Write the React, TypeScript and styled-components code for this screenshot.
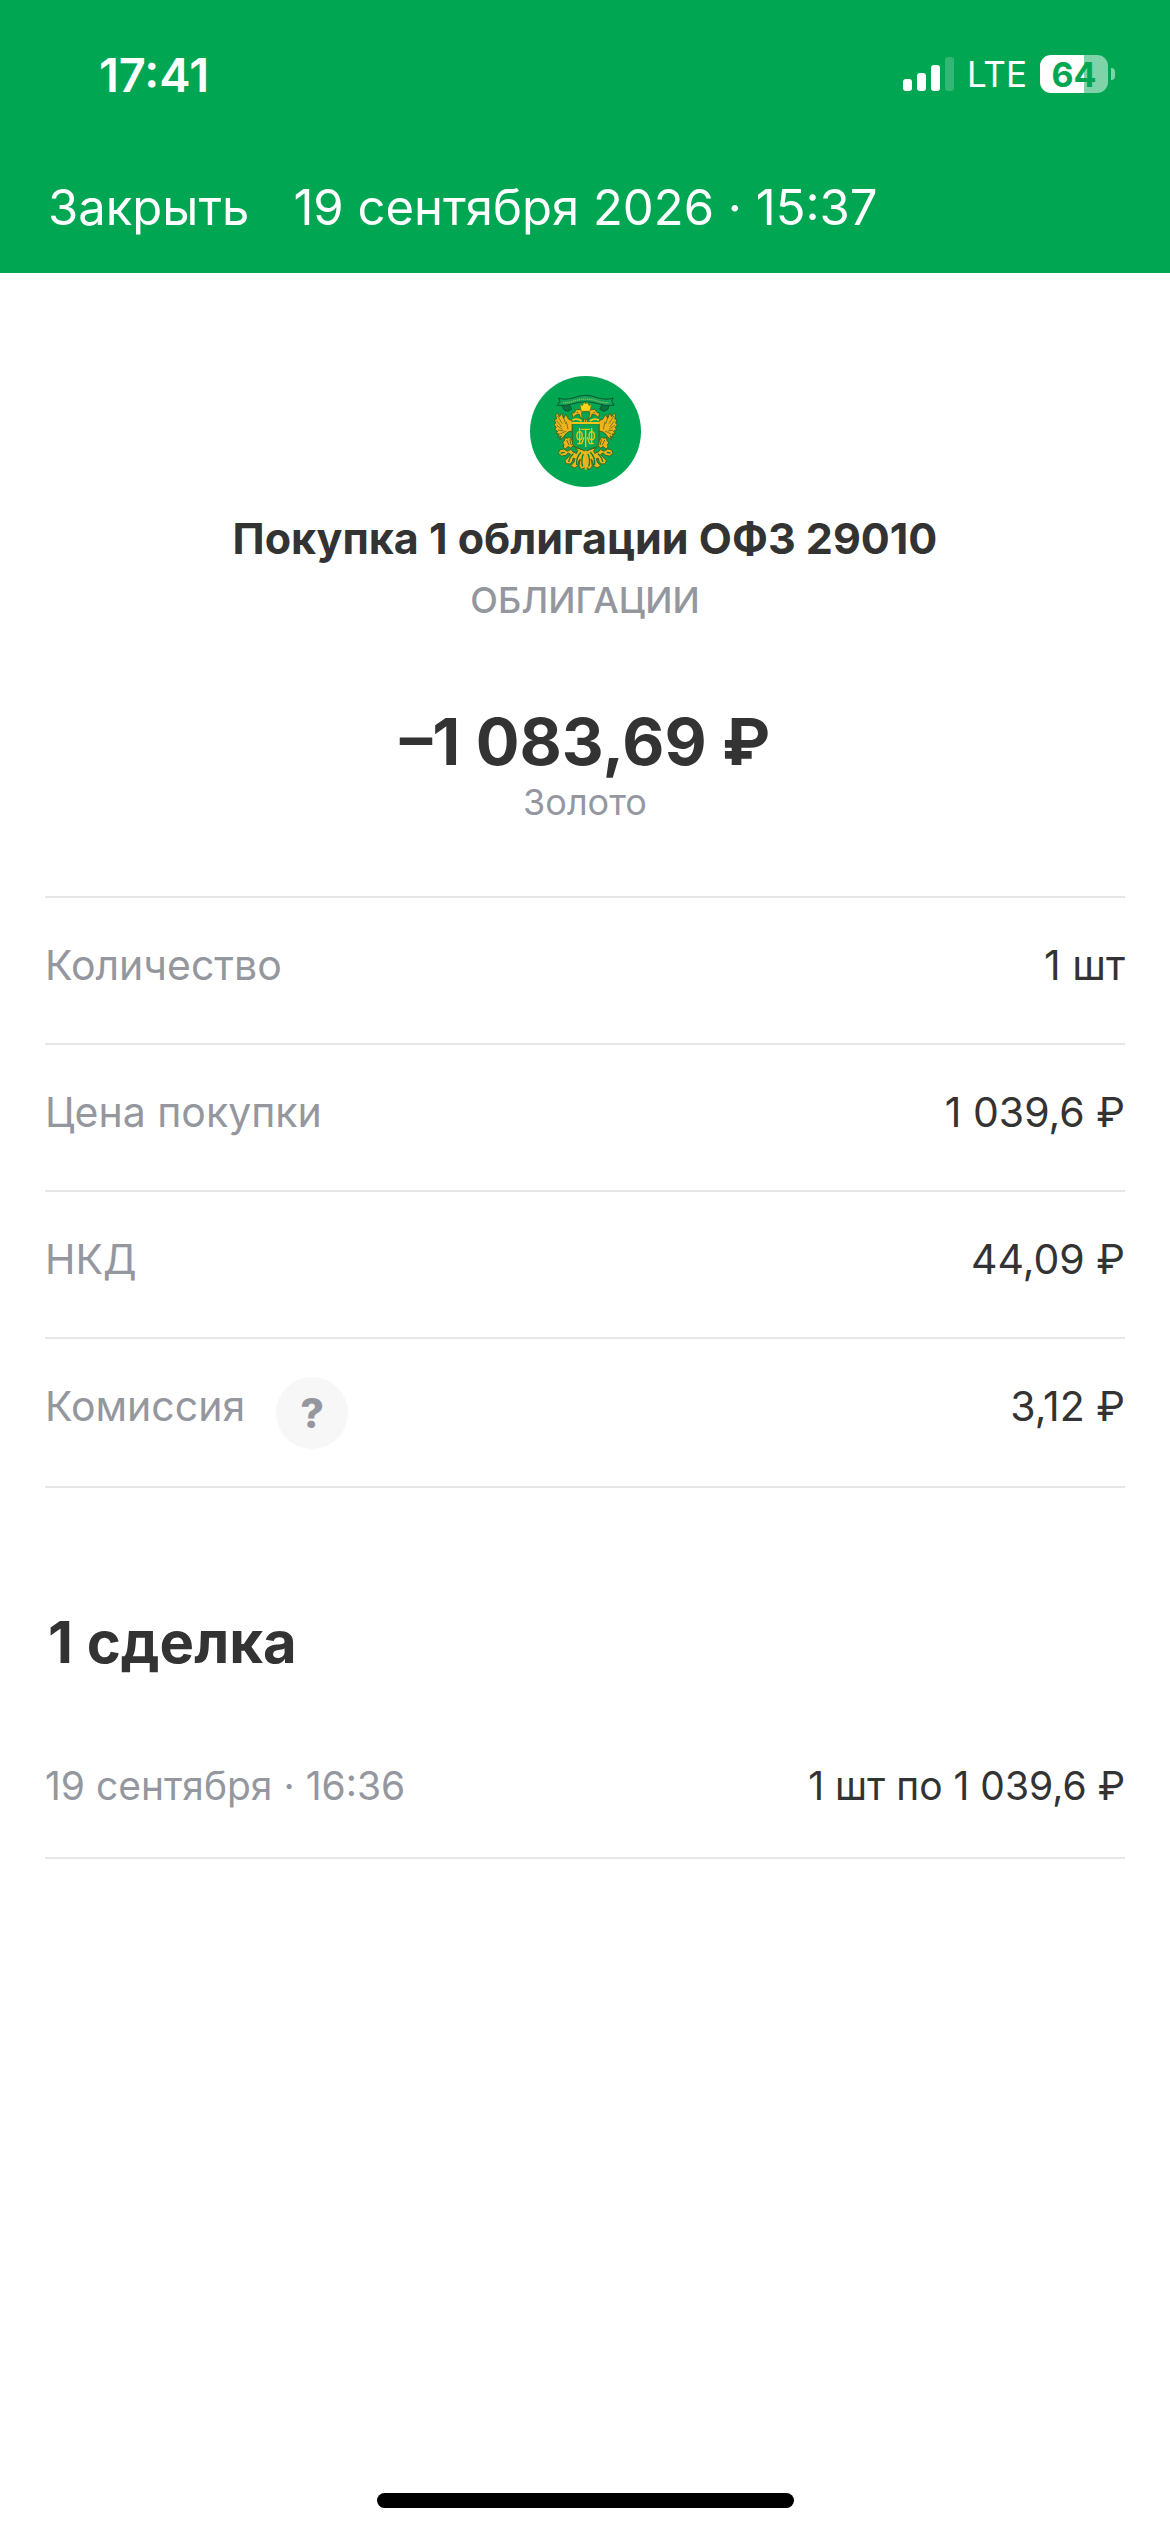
import styled, { createGlobalStyle } from 'styled-components';

const GlobalStyle = createGlobalStyle`
  * {
    box-sizing: border-box;
    margin: 0;
    padding: 0;
  }

  body {
    background: #fff;
    color: #333;
    font-family: Inter, 'Noto Sans', sans-serif;
  }

  button {
    border: none;
    background: none;
    font: inherit;
    cursor: pointer;
  }
`;

const PageLayout = styled.div`
  display: flex;
  flex-direction: column;
  min-height: 100vh;
`;

const Header = styled.header`
  padding: 46px 48px 36px;
  background: #01a652;
  color: #fff;
`;

const StatusBar = styled.div`
  display: flex;
  align-items: center;
  justify-content: space-between;
  height: 56px;
  padding: 0 7px 0 51px;
`;

const Clock = styled.time`
  font-size: 47px;
  font-weight: 600;
`;

const StatusIcons = styled.div`
  display: flex;
  align-items: center;
  gap: 13px;
`;

const Network = styled.span`
  font-size: 35px;
  font-weight: 400;
`;

const BatteryLayout = styled.div`
  display: flex;
  align-items: center;
  gap: 3px;
`;

const BatteryBody = styled.div<{ $level: number }>`
  display: flex;
  align-items: center;
  justify-content: center;
  width: 68px;
  height: 38px;
  border-radius: 11px;
  background: linear-gradient(
    to right,
    #fff ${({ $level }) => $level}%,
    #80d3a9 ${({ $level }) => $level}%
  );
  color: #01a652;
  font-size: 34px;
  font-weight: 700;
`;

const BatteryTip = styled.div`
  width: 4px;
  height: 12px;
  border-radius: 0 6px 6px 0;
  background: #80d3a9;
`;

const NavBar = styled.nav`
  display: flex;
  align-items: center;
  gap: 44px;
  height: 60px;
  margin-top: 75px;
`;

const CloseButton = styled.button`
  color: #fff;
  font-size: 49px;
`;

const NavTitle = styled.h1`
  font-size: 49px;
  font-weight: 400;
`;

const Content = styled.main`
  padding: 103px 45px 0;
`;

const Summary = styled.section`
  display: flex;
  flex-direction: column;
  align-items: center;
  text-align: center;
`;

const OperationTitle = styled.h2`
  margin-top: 26px;
  font-size: 43px;
  font-weight: 700;
  line-height: 50px;
`;

const Caption = styled.p`
  color: #95979f;
  font-size: 36px;
  line-height: 44px;
`;

const Category = styled(Caption)`
  margin-top: 15px;
  font-weight: 500;
`;

const Amount = styled.p`
  margin: 84px 0 2px;
  font-size: 65px;
  font-weight: 700;
  line-height: 72px;
`;

const DetailList = styled.dl`
  margin-top: 72px;
  border-top: 2px solid #e6e6e8;
`;

const DetailRow = styled.div`
  display: flex;
  align-items: flex-start;
  justify-content: space-between;
  min-height: 147px;
  padding: 38px 0 37px;
  border-bottom: 2px solid #e6e6e8;
  font-size: 41px;
  line-height: 58px;
`;

const DetailLabel = styled.dt`
  display: flex;
  gap: 31px;
  color: #95979f;
`;

const HelpButton = styled.button`
  width: 72px;
  height: 72px;
  border-radius: 50%;
  background: #f7f7f8;
  color: #95979f;
  font-weight: 800;
`;

const DealsTitle = styled.h2`
  margin: 122px 0 87px;
  padding-left: 3px;
  font-size: 58px;
  font-weight: 700;
  line-height: 64px;
`;

const DealList = styled.ul`
  list-style: none;
`;

const DealRow = styled.li`
  display: flex;
  justify-content: space-between;
  padding-bottom: 46px;
  border-bottom: 2px solid #e6e6e8;
  font-size: 39px;
  line-height: 50px;
`;

const DealDate = styled.time`
  color: #95979f;
`;

const HomeArea = styled.footer`
  display: flex;
  justify-content: center;
  margin-top: auto;
  padding: 24px 0;
`;

const HomeIndicator = styled.div`
  width: 417px;
  height: 15px;
  border-radius: 8px;
  background: #000;
`;

const details = [
  { label: 'Количество', value: '1 шт' },
  { label: 'Цена покупки', value: '1 039,6 ₽' },
  { label: 'НКД', value: '44,09 ₽' },
  { label: 'Комиссия', value: '3,12 ₽', hasHelp: true },
];

const deals = [{ date: '19 сентября · 16:36', value: '1 шт по 1 039,6 ₽' }];

function SignalIcon() {
  return (
    <svg width="51" height="34" viewBox="0 0 51 34" fill="#fff" aria-hidden="true">
      <rect x="0" y="22" width="9" height="12" rx="3" />
      <rect x="14" y="16" width="9" height="18" rx="3" />
      <rect x="28" y="8" width="9" height="26" rx="3" />
      <rect x="42" y="0" width="9" height="34" rx="3" opacity="0.2" />
    </svg>
  );
}

function EmblemHalf() {
  return (
    <g stroke="#3f5a1c" strokeWidth="2.5" strokeLinejoin="round" fill="#efb41c">
      {/* wing */}
      <path d="M216 212L205 208L196 193L190 205L184 189L178 200L171 190L166 194L169 207L162 208L166 220L161 224L168 233L163 238L172 244L167 251L177 252L172 262L183 258L178 270L189 262L195 253L205 245L216 243Z" />
      <path d="M171 197L186 221M169 212L184 231M169 226L186 238M173 240L190 243M180 252L198 243M188 198L196 222M198 215L203 238" fill="none" strokeWidth="2" />
      {/* neck and head */}
      <path d="M250 219L250 206L240 202L236 192L226 195L218 203L214 190L222 188L229 178L240 179L248 187L251 199L256 204V219Z" />
      <circle cx="231" cy="187" r="2" fill="#3f5a1c" stroke="none" />
      <path d="M216 211Q230 203 244 213" fill="none" stroke="#f5c51f" strokeWidth="5" />
      {/* leg */}
      <path d="M194 263L202 265L208 261L215 272L221 286L211 294L203 289L196 297L189 292L191 283L186 279L192 272Z" />
      <path d="M199 270L206 285M208 268L213 286" fill="none" />
      {/* tail */}
      <path d="M224 293L232 301L229 310L218 306L212 298L201 304L190 297L178 300L174 310L184 318L196 316L203 309L211 313L203 323L194 331L197 341L210 342L216 334L218 325L224 326L221 337L211 347L222 354L232 348L235 333L240 327L236 348L243 358L256 352V302Z" />
      <path d="M242 307Q227 322 229 345M249 312Q241 331 247 350M219 311Q207 321 205 336M181 309L193 307" fill="none" strokeWidth="4" stroke="#087f3e" />
    </g>
  );
}

function EmblemLogo() {
  return (
    <svg width="111" height="111" viewBox="89 78 333 333" role="img" aria-label="ОФЗ">
      <circle cx="255.5" cy="244.5" r="166.5" fill="#01a652" />
      <EmblemHalf />
      <g transform="translate(512 0) scale(-1 1)">
        <EmblemHalf />
      </g>
      {/* ribbon */}
      <path
        d="M185 164L190 179L203 184L214 177L207 165M327 164L322 179L309 184L298 177L305 165"
        fill="#087541"
        stroke="#08552f"
        strokeWidth="3"
      />
      <path
        d="M175 144Q190 151 218 144Q239 136 256 136Q273 136 294 144Q322 151 338 144L334 154L341 166Q314 169 293 161Q256 150 219 161Q198 169 171 166L179 154Z"
        fill="#12a35a"
        stroke="#08552f"
        strokeWidth="3"
      />
      <path
        d="M188 158Q207 159 223 152Q256 143 289 152Q305 159 325 158"
        fill="none"
        stroke="#80bd55"
        strokeWidth="4"
        strokeDasharray="4 2"
      />
      {/* crown */}
      <path
        d="M239 163L246 167L251 157L256 162L261 157L266 167L273 163L269 184H243Z"
        fill="#ffd21c"
        stroke="#6c7416"
        strokeWidth="2"
      />
      <path d="M243 188Q256 181 269 188L267 200L256 211L245 200Z" fill="#01a652" stroke="#4e651b" strokeWidth="2" />
      {/* shield */}
      <path
        d="M216 221H296V278Q296 291 278 294L256 304L234 294Q216 291 216 278Z"
        fill="#08a650"
        stroke="#45631b"
        strokeWidth="3"
      />
      <path d="M214 219H298" stroke="#f6c51d" strokeWidth="6" />
      <g fill="none" stroke="#edc41c" strokeWidth="4">
        <path d="M238 234V281M274 234V281M238 245C227 245 227 269 238 269C248 269 248 245 238 245ZM274 245C264 245 264 269 274 269C285 269 285 245 274 245Z" />
        <path d="M243 238H269M256 238V291M244 281L251 262M268 281L261 262M231 281H244M268 281H281" />
      </g>
      <path d="M256 302V359" stroke="#edb51c" strokeWidth="6" />
    </svg>
  );
}

export default function App() {
  return (
    <PageLayout>
      <GlobalStyle />
      <Header>
        <StatusBar>
          <Clock>17:41</Clock>
          <StatusIcons>
            <SignalIcon />
            <Network>LTE</Network>
            <BatteryLayout>
              <BatteryBody $level={64}>64</BatteryBody>
              <BatteryTip />
            </BatteryLayout>
          </StatusIcons>
        </StatusBar>
        <NavBar>
          <CloseButton type="button">Закрыть</CloseButton>
          <NavTitle>19 сентября 2026 · 15:37</NavTitle>
        </NavBar>
      </Header>

      <Content>
        <Summary>
          <EmblemLogo />
          <OperationTitle>Покупка 1 облигации ОФЗ 29010</OperationTitle>
          <Category>ОБЛИГАЦИИ</Category>
          <Amount>–1 083,69 ₽</Amount>
          <Caption>Золото</Caption>
        </Summary>

        <DetailList>
          {details.map(({ label, value, hasHelp }) => (
            <DetailRow key={label}>
              <DetailLabel>
                {label}
                {hasHelp && <HelpButton type="button">?</HelpButton>}
              </DetailLabel>
              <dd>{value}</dd>
            </DetailRow>
          ))}
        </DetailList>

        <DealsTitle>1 сделка</DealsTitle>
        <DealList>
          {deals.map(({ date, value }) => (
            <DealRow key={date}>
              <DealDate>{date}</DealDate>
              <span>{value}</span>
            </DealRow>
          ))}
        </DealList>
      </Content>

      <HomeArea>
        <HomeIndicator />
      </HomeArea>
    </PageLayout>
  );
}
